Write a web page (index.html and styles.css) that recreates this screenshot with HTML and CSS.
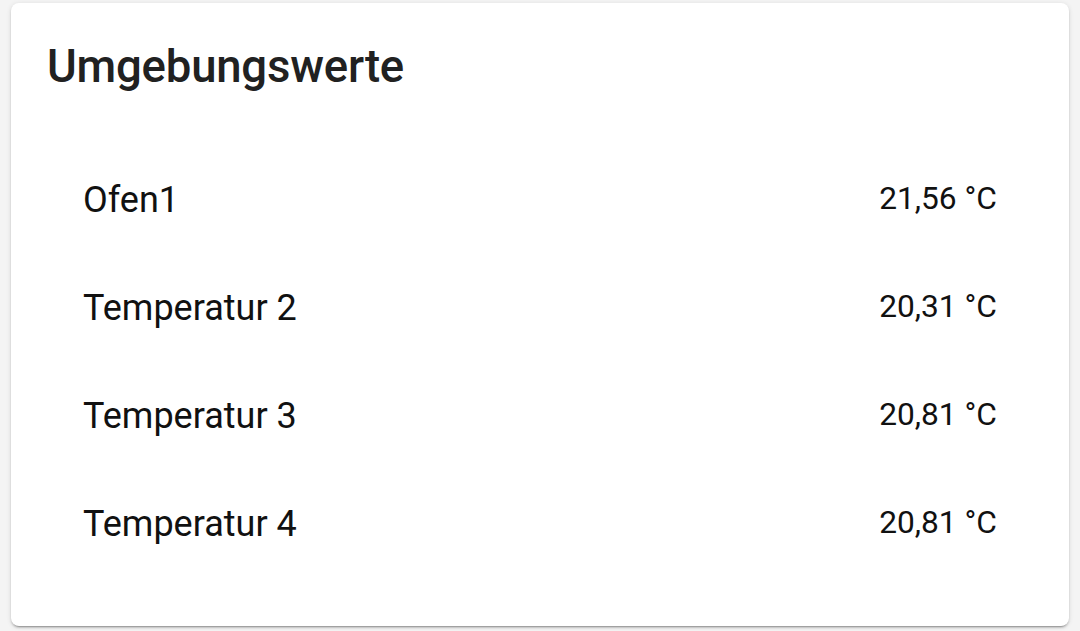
FILE: index.html
```html
<!DOCTYPE html>
<html>
<head>
<meta charset="utf-8">
<link rel="stylesheet" href="styles.css">
</head>
<body>
<div class="card">
  <div class="card-header">Umgebungswerte</div>
  <div class="rows">
    <div class="row"><span class="name">Ofen1</span><span class="state">21,56 °C</span></div>
    <div class="row"><span class="name">Temperatur 2</span><span class="state">20,31 °C</span></div>
    <div class="row"><span class="name">Temperatur 3</span><span class="state">20,81 °C</span></div>
    <div class="row"><span class="name">Temperatur 4</span><span class="state">20,81 °C</span></div>
  </div>
</div>
</body>
</html>
```
FILE: styles.css
```css
html, body {
  margin: 0;
  padding: 0;
  background: #f4f4f4;
  font-family: Roboto, "Liberation Sans", sans-serif;
}
body {
  padding: 3px 11px 0 11px;
  height: 631px;
  box-sizing: border-box;
}
.card {
  background: #ffffff;
  border-radius: 8px;
  height: 623px;
  box-shadow: 0 2px 2px 0 rgba(0,0,0,0.14), 0 1px 5px 0 rgba(0,0,0,0.12), 0 3px 1px -2px rgba(0,0,0,0.2);
  box-sizing: border-box;
}
.card-header {
  color: #212121;
  font-size: 45.5px;
  font-weight: 500;
  line-height: 64px;
  padding: 32px 36px 0 36px;
  letter-spacing: -0.2px;
}
.rows {
  padding: 47px 72px 0 72px;
  display: flex;
  flex-direction: column;
}
.row {
  display: flex;
  justify-content: space-between;
  align-items: center;
  height: 108px;
}
.name {
  font-size: 36px;
  color: #111111;
}
.state {
  font-size: 31.7px;
  color: #111111;
  margin-top: -3px;
}
```
